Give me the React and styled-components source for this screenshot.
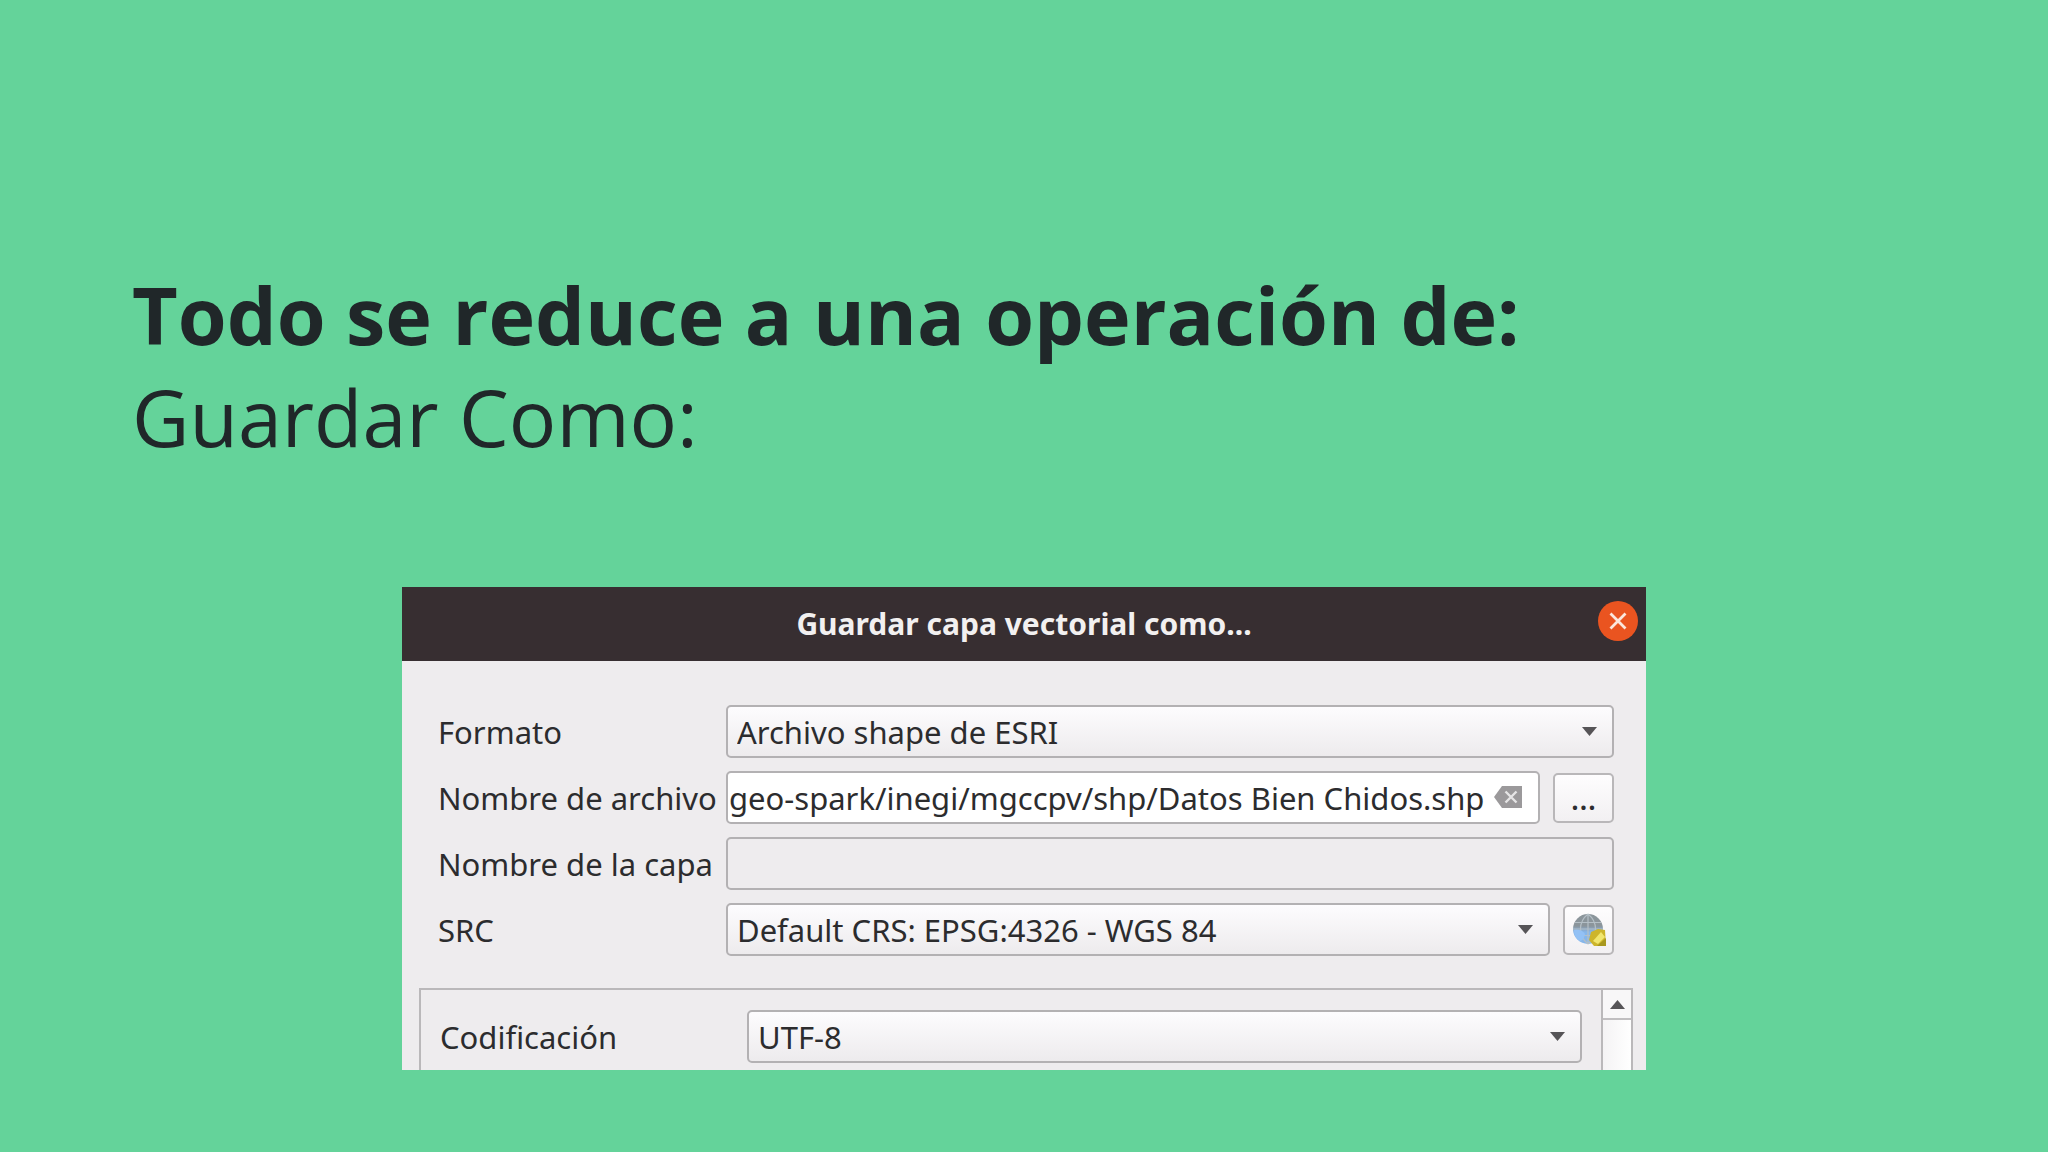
import { useState } from "react"
import styled, { createGlobalStyle } from "styled-components"

const GlobalStyle = createGlobalStyle`
    * {
        box-sizing: border-box;
    }

    body {
        margin: 0;
        background: #64d39a;
    }
`

const Slide = styled.main`
    display: flex;
    flex-direction: column;
    min-height: 100vh;
    padding: 264px 132px 82px;
`

const Heading = styled.h1`
    margin: 0 0 119px;
    font-family: "Open Sans", sans-serif;
    font-size: 79px;
    font-weight: 700;
    line-height: 102px;
    color: #202729;
`

const Subtitle = styled.span`
    display: block;
    font-weight: 400;
`

const Dialog = styled.section`
    display: flex;
    flex-direction: column;
    margin: 0 270px;
    background: #eeecee;
    font-family: "Noto Sans", sans-serif;
    font-size: 31px;
    color: #2c2c2e;
`

const TitleBar = styled.header`
    display: grid;
    grid-template-columns: 40px 1fr 40px;
    align-items: center;
    height: 74px;
    padding: 0 8px;
    background: #372e31;
`

const Title = styled.h2`
    grid-column: 2;
    margin: 0;
    font-size: 30px;
    font-weight: 700;
    line-height: 40px;
    text-align: center;
    color: #f2f0f0;
`

const CloseButton = styled.button`
    display: flex;
    width: 40px;
    height: 40px;
    padding: 0;
    border: none;
    border-radius: 50%;
    margin-bottom: 6px;
    background: #ea5420;
`

const Form = styled.form`
    display: flex;
    flex-direction: column;
    padding: 44px 13px 0 17px;
`

const Rows = styled.div`
    display: flex;
    flex-direction: column;
    gap: 13px;
    padding: 0 19px;
    margin-bottom: 32px;
`

const Row = styled.div`
    display: grid;
    grid-template-columns: ${props => props.$labelWidth}px 1fr;
    align-items: center;
`

const Label = styled.label`
    line-height: 40px;
    white-space: nowrap;
`

const Controls = styled.div`
    display: flex;
    align-items: center;
    gap: 13px;
`

const Field = styled.div`
    position: relative;
    display: flex;
    flex: 1;
    min-width: 0;
`

const Select = styled.select`
    appearance: none;
    width: 100%;
    height: 53px;
    padding: 0 48px 0 9px;
    border: 2px solid #b3b1b3;
    border-radius: 5px;
    background: linear-gradient(#fdfcfe, #edebed);
    font: inherit;
    color: inherit;
`

const TextInput = styled.input`
    width: 100%;
    height: 53px;
    padding: 0 50px 0 1px;
    border: 2px solid #b3b1b3;
    border-radius: 5px;
    background: #ffffff;
    font: inherit;
    color: inherit;

    &:disabled {
        background: #eeecee;
    }
`

const SelectArrow = styled.svg`
    position: absolute;
    top: 22px;
    right: 17px;
    pointer-events: none;
`

const ClearButton = styled.button`
    position: absolute;
    top: 15px;
    right: 18px;
    display: flex;
    padding: 0;
    border: none;
    background: none;
`

const ToolButton = styled.button`
    display: flex;
    justify-content: center;
    align-items: center;
    width: ${props => props.$width}px;
    height: 50px;
    padding: 0;
    border: 2px solid #b9b7b9;
    border-radius: 5px;
    background: linear-gradient(#fefdfe, #f2f0f2);
    font: inherit;
    font-weight: 500;
    color: inherit;
`

const ScrollFrame = styled.div`
    display: flex;
    border: 2px solid #bab8ba;
    border-bottom: none;
`

const ScrollContent = styled.div`
    flex: 1;
    padding: 20px 19px 7px;
`

const ScrollBar = styled.div`
    width: 30px;
    border-left: 2px solid #bab8ba;
    background: linear-gradient(90deg, #f4f3f4, #ffffff);
`

const ScrollUp = styled.button`
    display: flex;
    justify-content: center;
    align-items: center;
    width: 100%;
    height: 30px;
    padding: 0;
    border: none;
    border-bottom: 2px solid #c0bec0;
    background: #f8f7f8;
`

const CloseIcon = () => {
    return (
        <svg width="40" height="40" viewBox="0 0 40 40" aria-hidden="true">
            <path d="M12.5 12.5L27.5 27.5M27.5 12.5L12.5 27.5" stroke="#fbe6dc" strokeWidth="2.8" />
        </svg>
    )
}

const ClearIcon = () => {
    return (
        <svg width="28" height="22" viewBox="0 0 28 22" aria-hidden="true">
            <path d="M0 11L8 0H28V22H8Z" fill="#9b999b" />
            <path d="M11.5 5.5L22.5 16.5M22.5 5.5L11.5 16.5" stroke="#e6e5e6" strokeWidth="2.4" />
        </svg>
    )
}

const GlobeIcon = () => {
    return (
        <svg width="36" height="36" viewBox="0 0 36 36" aria-hidden="true">
            <defs>
                <linearGradient id="globe" x1="0" y1="0" x2="0" y2="1">
                    <stop offset="0.4" stopColor="#8b959b" />
                    <stop offset="0.6" stopColor="#86b6ea" />
                </linearGradient>
            </defs>
            <circle cx="17" cy="17" r="15" fill="url(#globe)" />
            <path
                d="M2 17H32M4 10.5H30M4 23.5H30M17 2V32M17 2C7 10 7 24 17 32M17 2C27 10 27 24 17 32"
                fill="none"
                stroke="#b4bfc6"
                strokeWidth="1.2"
            />
            <path d="M3 18C7 17 12 18 14 22C13 27 11 29 9 29C5 27 3 23 3 18Z" fill="#93c1f5" />
            <path d="M20 20L27 17L34 18L35 34L23 34L18 28Z" fill="#cdb52b" />
            <path d="M22 29L30 20L34 25L27 32Z" fill="#f1e66e" />
            <path d="M26 34L35 26V34Z" fill="#a8981f" />
        </svg>
    )
}

const Combo = ({ id, options }) => {
    return (
        <Field>
            <Select id={id}>
                {options.map((option) => {
                    return <option key={option}>{option}</option>
                })}
            </Select>
            <SelectArrow width="15" height="9" viewBox="0 0 15 9" aria-hidden="true">
                <path d="M0 0H15L7.5 9Z" fill="#565457" />
            </SelectArrow>
        </Field>
    )
}

const App = () => {
    const [fileName, setFileName] = useState("geo-spark/inegi/mgccpv/shp/Datos Bien Chidos.shp")

    return (
        <>
            <GlobalStyle />
            <Slide>
                <Heading>
                    Todo se reduce a una operación de:
                    <Subtitle>Guardar Como:</Subtitle>
                </Heading>
                <Dialog>
                    <TitleBar>
                        <Title>Guardar capa vectorial como...</Title>
                        <CloseButton type="button" aria-label="Cerrar"><CloseIcon /></CloseButton>
                    </TitleBar>
                    <Form onSubmit={(e) => e.preventDefault()}>
                        <Rows>
                            <Row $labelWidth={288}>
                                <Label htmlFor="formato">Formato</Label>
                                <Combo id="formato" options={["Archivo shape de ESRI"]} />
                            </Row>
                            <Row $labelWidth={288}>
                                <Label htmlFor="archivo">Nombre de archivo</Label>
                                <Controls>
                                    <Field>
                                        <TextInput id="archivo" value={fileName} onChange={(e) => setFileName(e.target.value)} />
                                        <ClearButton type="button" aria-label="Borrar" onClick={() => setFileName("")}>
                                            <ClearIcon />
                                        </ClearButton>
                                    </Field>
                                    <ToolButton type="button" $width={61}>...</ToolButton>
                                </Controls>
                            </Row>
                            <Row $labelWidth={288}>
                                <Label htmlFor="capa">Nombre de la capa</Label>
                                <TextInput id="capa" disabled />
                            </Row>
                            <Row $labelWidth={288}>
                                <Label htmlFor="src">SRC</Label>
                                <Controls>
                                    <Combo id="src" options={["Default CRS: EPSG:4326 - WGS 84"]} />
                                    <ToolButton type="button" $width={51} aria-label="Seleccionar SRC"><GlobeIcon /></ToolButton>
                                </Controls>
                            </Row>
                        </Rows>
                        <ScrollFrame>
                            <ScrollContent>
                                <Row $labelWidth={307}>
                                    <Label htmlFor="codificacion">Codificación</Label>
                                    <Combo id="codificacion" options={["UTF-8"]} />
                                </Row>
                            </ScrollContent>
                            <ScrollBar>
                                <ScrollUp type="button" aria-label="Subir">
                                    <svg width="15" height="9" viewBox="0 0 15 9" aria-hidden="true">
                                        <path d="M0 9H15L7.5 0Z" fill="#565457" />
                                    </svg>
                                </ScrollUp>
                            </ScrollBar>
                        </ScrollFrame>
                    </Form>
                </Dialog>
            </Slide>
        </>
    )
}

export default App
